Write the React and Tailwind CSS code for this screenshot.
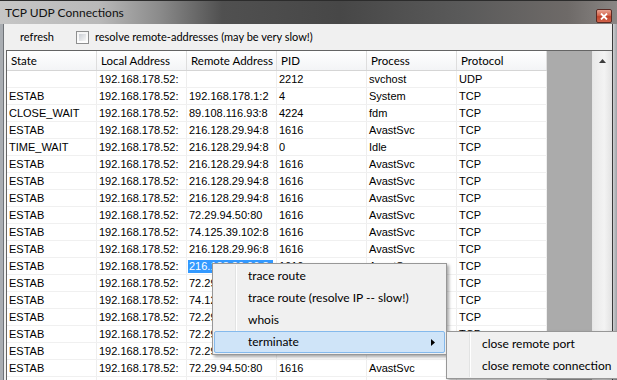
import React from "react";

const rows = [
  ["", "192.168.178.52:", "", "2212", "svchost", "UDP"],
  ["ESTAB", "192.168.178.52:", "192.168.178.1:2", "4", "System", "TCP"],
  ["CLOSE_WAIT", "192.168.178.52:", "89.108.116.93:8", "4224", "fdm", "TCP"],
  ["ESTAB", "192.168.178.52:", "216.128.29.94:8", "1616", "AvastSvc", "TCP"],
  ["TIME_WAIT", "192.168.178.52:", "216.128.29.94:8", "0", "Idle", "TCP"],
  ["ESTAB", "192.168.178.52:", "216.128.29.94:8", "1616", "AvastSvc", "TCP"],
  ["ESTAB", "192.168.178.52:", "216.128.29.94:8", "1616", "AvastSvc", "TCP"],
  ["ESTAB", "192.168.178.52:", "216.128.29.94:8", "1616", "AvastSvc", "TCP"],
  ["ESTAB", "192.168.178.52:", "72.29.94.50:80", "1616", "AvastSvc", "TCP"],
  ["ESTAB", "192.168.178.52:", "74.125.39.102:8", "1616", "AvastSvc", "TCP"],
  ["ESTAB", "192.168.178.52:", "216.128.29.96:8", "1616", "AvastSvc", "TCP"],
  ["ESTAB", "192.168.178.52:", "216.128.29.96:8", "1616", "AvastSvc", "TCP"],
  ["ESTAB", "192.168.178.52:", "72.29.94.50:80", "1616", "AvastSvc", "TCP"],
  ["ESTAB", "192.168.178.52:", "74.125.39.102:8", "1616", "AvastSvc", "TCP"],
  ["ESTAB", "192.168.178.52:", "72.29.94.50:80", "1616", "AvastSvc", "TCP"],
  ["ESTAB", "192.168.178.52:", "72.29.94.50:80", "1616", "AvastSvc", "TCP"],
  ["ESTAB", "192.168.178.52:", "72.29.94.50:80", "1616", "AvastSvc", "TCP"],
  ["ESTAB", "192.168.178.52:", "72.29.94.50:80", "1616", "AvastSvc", "TCP"],
  ["", "", "", "", "", ""],
];

const headers = ["State", "Local Address", "Remote Address", "PID", "Process", "Protocol"];

const SELECTED_ROW = 11;

function MenuItem({ label, active, arrow }) {
  return (
    <div
      className={
        active
          ? "relative flex h-[22px] items-center border border-[#84b9ec] bg-[#cfe4f8] rounded-[2px]"
          : "relative flex h-[22px] items-center border border-transparent"
      }
    >
      <span className="pl-[33px] text-[12px] leading-none text-black whitespace-nowrap">{label}</span>
      {arrow && (
        <svg className="absolute right-[9px] top-[7px]" width="4" height="7" viewBox="0 0 4 7">
          <path d="M0 0 L4 3.5 L0 7 Z" fill="#000" />
        </svg>
      )}
    </div>
  );
}

function Menu({ className, children }) {
  return (
    <div
      className={
        "absolute border border-[#979797] bg-[#f0f0f0] py-[1px] px-[1px] shadow-[2px_2px_3px_rgba(0,0,0,0.35)] font-['Lato',sans-serif] " +
        className
      }
    >
      <div className="absolute left-[22px] top-[1px] bottom-[1px] w-[2px] border-l border-[#e2e3e3] bg-white" />
      {children}
    </div>
  );
}

export default function App() {
  return (
    <div className="relative h-[380px] w-[617px] overflow-hidden bg-[#6a6a6a] font-['Lato',sans-serif]">
      {/* title bar */}
      <div className="flex h-[24px] items-start justify-between border-t border-[#2c2c2c] bg-[linear-gradient(90deg,#c6c6c6_0%,#b9b9b9_16%,#8a8a8a_26%,#505050_36%,#474747_55%,#5a5a5a_75%,#6e6a68_92%,#8a8684_100%)]">
        <span className="whitespace-nowrap pl-[5px] pt-[4px] text-[12px] leading-[16px] text-[#111]">TCP UDP Connections</span>
        <div className="mr-[5px] mt-[8px] flex h-[14px] w-[16px] items-center justify-center rounded-[2px] border border-[#5b2a24] bg-[linear-gradient(180deg,#e8a493_0%,#d5654d_45%,#c0432b_55%,#d2634a_100%)]">
          <svg width="8" height="7" viewBox="0 0 8 7">
            <path d="M1 0.5 L7 6.5 M7 0.5 L1 6.5" stroke="#fff" strokeWidth="1.8" />
          </svg>
        </div>
      </div>

      <div className="flex h-[356px]">
        {/* left frame */}
        <div className="w-[4px] border-r border-[#6f7378] bg-[#a9adb2]" />

        {/* client */}
        <div className="flex min-h-0 flex-1 flex-col bg-[#f0f0f0]">
          {/* toolbar */}
          <div className="flex h-[26px] shrink-0 items-center">
            <span className="w-[72px] whitespace-nowrap pl-[16px] text-[11px] text-black">refresh</span>
            <div className="h-[13px] w-[13px] border border-[#8e8f8f] bg-[linear-gradient(180deg,#f4f4f4,#fefefe)] p-[2px]">
              <div className="h-full w-full bg-[linear-gradient(135deg,#cbcfd5,#f6f6f6)]" />
            </div>
            <span className="whitespace-nowrap pl-[6px] text-[11px] text-black">resolve remote-addresses (may be very slow!)</span>
          </div>

          {/* list view */}
          <div className="ml-[2px] flex min-h-0 flex-1 overflow-hidden border-l border-t border-[#646464]">
            <div className="flex w-[540px] flex-col bg-white">
              <div className="flex h-[20px] shrink-0 border-b border-[#d5d5d5] bg-[linear-gradient(180deg,#ffffff,#f3f4f6)]">
                {headers.map((h) => (
                  <div
                    key={h}
                    className="flex w-[90px] items-center overflow-hidden whitespace-nowrap border-r border-[#dedede] pl-[4px] text-[11.5px] text-black"
                  >
                    {h}
                  </div>
                ))}
              </div>
              {rows.map((r, i) => (
                <div key={i} className="flex h-[17px] shrink-0 border-b border-[#f0f0f0]">
                  {r.map((c, j) => (
                    <div
                      key={j}
                      className="flex w-[90px] items-center overflow-hidden whitespace-nowrap border-r border-[#eeeeee] pl-[2px] font-['Liberation_Sans',Arial,sans-serif] text-[11px] text-black"
                    >
                      {i === SELECTED_ROW && j === 2 ? (
                        <span className="-ml-[1px] bg-[#3399ff] pl-[1px] pr-[4px] leading-[13px] text-white">{c}</span>
                      ) : (
                        c
                      )}
                    </div>
                  ))}
                </div>
              ))}
            </div>
            <div className="flex-1 bg-[#ababab]" />
            {/* scrollbar */}
            <div className="flex w-[20px] flex-col items-center border-l border-[#e6e6e6] bg-[linear-gradient(90deg,#e9e9e9,#f3f3f3_60%,#e2e2e2)]">
              <svg className="mt-[8px]" width="7" height="4" viewBox="0 0 7 4">
                <path d="M0 4 L3.5 0 L7 4 Z" fill="#3c3c3c" />
              </svg>
            </div>
          </div>
        </div>

        {/* right frame */}
        <div className="w-[5px] border-l border-[#3a3a3a] bg-[linear-gradient(90deg,#cfd0d2,#9ea2a6)]" />
      </div>

      {/* context menu */}
      <Menu className="left-[212px] top-[263px] w-[235px]">
        <MenuItem label="trace route" />
        <MenuItem label="trace route (resolve IP -- slow!)" />
        <MenuItem label="whois" />
        <MenuItem label="terminate" active arrow />
      </Menu>

      {/* submenu */}
      <Menu className="left-[446px] top-[331px] w-[190px]">
        <MenuItem label="close remote port" />
        <MenuItem label="close remote connection" />
      </Menu>
    </div>
  );
}
